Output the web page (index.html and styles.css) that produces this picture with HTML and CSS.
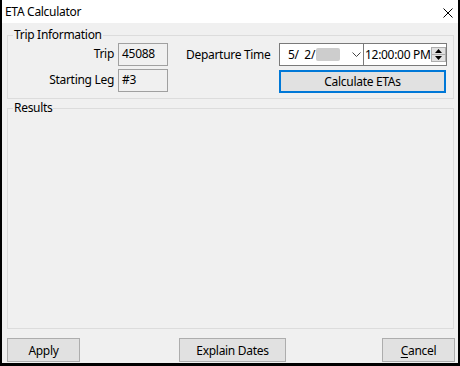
FILE: index.html
```html
<!DOCTYPE html>
<html lang="en">
<head>
<meta charset="utf-8">
<title>ETA Calculator</title>
<link rel="stylesheet" href="styles.css">
</head>
<body>
<div class="window">
  <div class="titlebar">
    <span class="title">ETA Calculator</span>
    <svg class="close" width="10" height="10" viewBox="0 0 10 10"><path d="M0.5 0.5 L9.5 9.5 M9.5 0.5 L0.5 9.5" stroke="#000" stroke-width="1" fill="none"/></svg>
  </div>
  <div class="client">
    <fieldset class="group trip">
      <legend>Trip Information</legend>
      <div class="trip-body">
        <div class="left-grid">
          <span class="lbl">Trip</span>
          <span class="tbox">45088</span>
          <span class="lbl">Starting Leg</span>
          <span class="tbox">#3</span>
        </div>
        <div class="right-grid">
          <span class="lbl-l">Departure Time</span>
          <div class="dt">
            <div class="date">
              <span class="date-txt">5/&nbsp; 2/</span>
              <span class="redact"></span>
              <svg class="chev" width="9" height="5" viewBox="0 0 9 5"><path d="M0.5 0.5 L4.5 4.5 L8.5 0.5" stroke="#444" stroke-width="1" fill="none"/></svg>
            </div>
            <div class="time">
              <span class="time-txt">12:00:00 PM</span>
              <div class="spin">
                <div class="spin-btn"><svg width="7" height="4" viewBox="0 0 7 4"><path d="M3.5 0 L7 4 L0 4 Z" fill="#000"/></svg></div>
                <div class="spin-btn"><svg width="7" height="4" viewBox="0 0 7 4"><path d="M0 0 L7 0 L3.5 4 Z" fill="#000"/></svg></div>
              </div>
            </div>
          </div>
          <span></span>
          <button class="btn default">Calculate ETAs</button>
        </div>
      </div>
    </fieldset>
    <fieldset class="group results">
      <legend>Results</legend>
    </fieldset>
    <div class="footer">
      <button class="btn fb-apply">Apply</button>
      <button class="btn fb-explain">Explain Dates</button>
      <button class="btn fb-cancel"><u>C</u>ancel</button>
    </div>
  </div>
</div>
</body>
</html>
```

FILE: styles.css
```css
* { box-sizing: border-box; }
html, body { margin: 0; padding: 0; }
body {
  width: 460px;
  height: 366px;
  font-family: "Noto Sans", "Liberation Sans", sans-serif;
  font-size: 12px;
  letter-spacing: -0.3px;
  color: #000;
  background: #000;
}
.window {
  width: 460px;
  height: 366px;
  border-left: 2px solid #000;
  border-right: 2px solid #000;
  border-bottom: 3px solid #000;
  background: #f0f0f0;
  display: flex;
  flex-direction: column;
}
.titlebar {
  height: 23px;
  background: #fff;
  display: flex;
  align-items: center;
  justify-content: space-between;
  padding: 0 5px 0 3px;
}
.title { line-height: 16px; }
.close { display: block; margin-top: 3px; }
.client {
  flex: 1;
  display: flex;
  flex-direction: column;
  padding: 5px 3px 0 5px;
}
.group {
  margin: 0 1px 0 0;
  padding: 0;
  border: 1px solid #dcdcdc;
  min-width: 0;
}
.group legend {
  padding: 0 1px;
  margin-left: 5px;
  line-height: 14px;
  height: 14px;
}
.trip-body {
  display: flex;
  padding: 1px 0 5px 0;
  white-space: nowrap;
}
.left-grid {
  display: grid;
  grid-template-columns: 106px 50px;
  grid-auto-rows: 23px;
  column-gap: 4px;
  row-gap: 3px;
}
.lbl {
  text-align: right;
  line-height: 21px;
}
.lbl-l { line-height: 23px; }
.tbox {
  border: 1px solid #a0a0a0;
  background: #f0f0f0;
  padding: 0 3px;
  line-height: 19px;
}
.right-grid {
  margin-left: 18px;
  display: grid;
  grid-template-columns: 93px 168px;
  grid-auto-rows: 23px;
  row-gap: 4px;
}
.dt {
  display: flex;
  border: 1px solid #7a7a7a;
  background: #fff;
}
.date {
  width: 84px;
  flex: none;
  display: flex;
  align-items: center;
  border-right: 1px solid #7a7a7a;
  padding-left: 8px;
}
.date-txt { line-height: 19px; }
.redact {
  width: 24px;
  height: 13px;
  background: #cdcdcd;
  margin-left: 1px;
  border-radius: 2px;
  filter: blur(0.6px);
}
.chev { margin-left: 12px; }
.time {
  flex: 1;
  display: flex;
  align-items: center;
  min-width: 0;
}
.time-txt { padding-left: 1px; line-height: 19px; flex: 1; }
.spin {
  width: 15px;
  height: 15px;
  margin-right: 2px;
  display: flex;
  flex-direction: column;
  border: 1px solid #adadad;
  flex: none;
}
.spin-btn {
  flex: 1;
  display: flex;
  align-items: center;
  justify-content: center;
  background: #e1e1e1;
}
.spin-btn + .spin-btn { border-top: 1px solid #adadad; }
.spin-btn svg { display: block; }
.btn {
  font: inherit;
  letter-spacing: inherit;
  color: #000;
  background: #e1e1e1;
  border: 1px solid #adadad;
  padding: 0;
  margin: 0;
  height: 23px;
}
.btn.default {
  width: 167px;
  border: 2px solid #0078d7;
}
.results {
  margin-top: 2px;
  flex: 1;
}
.footer {
  display: grid;
  grid-template-columns: 73px 99px 107px 1fr 73px;
  grid-template-rows: 24px;
  padding: 9px 0 1px 0;
}
.footer .btn { height: 24px; }
.fb-apply { grid-column: 1; }
.fb-explain { grid-column: 3; }
.fb-cancel { grid-column: 5; }
u { text-decoration: underline; text-underline-offset: 2px; }
```
